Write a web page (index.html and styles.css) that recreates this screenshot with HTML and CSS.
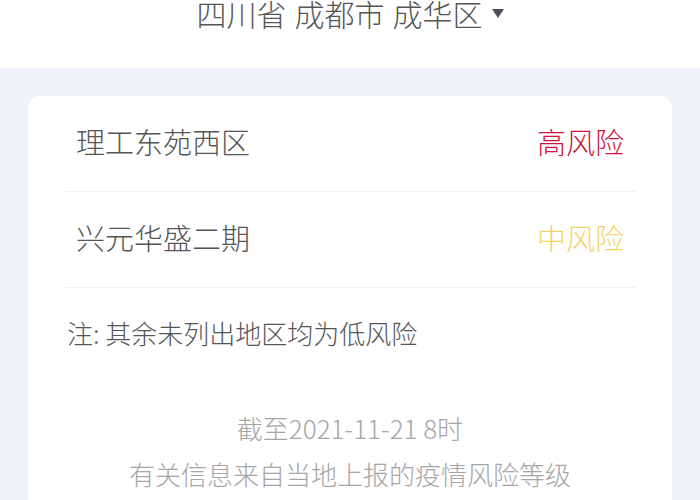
FILE: index.html
```html
<!DOCTYPE html>
<html lang="zh-CN">

<head>
    <meta charset="UTF-8">
    <meta name="viewport" content="width=device-width, initial-scale=1.0">
    <title>风险地区</title>
    <link rel="stylesheet" href="styles.css">
</head>

<body>

    <!-- 地区选择 -->
    <div class="header">
        <div class="area">
            <span>四川省</span>
            <span>成都市</span>
            <span>成华区</span>
            <i class="arrow"></i>
        </div>
    </div>

    <div class="main">
        <div class="card">
            <ul class="risk-list">
                <li>
                    <span class="name">理工东苑西区</span>
                    <span class="level high">高风险</span>
                </li>
                <li>
                    <span class="name">兴元华盛二期</span>
                    <span class="level middle">中风险</span>
                </li>
            </ul>

            <p class="note">注: 其余未列出地区均为低风险</p>

            <div class="footer">
                <p>截至2021-11-21 8时</p>
                <p>有关信息来自当地上报的疫情风险等级</p>
            </div>
        </div>
    </div>

</body>

</html>
```

FILE: styles.css
```css
* {
    margin: 0;
    padding: 0;
    box-sizing: border-box;
}

ul {
    list-style: none;
}

body {
    background-color: #eff3f8;
    font-family: "Noto Sans CJK SC", "Noto Sans", sans-serif;
    font-weight: 300;
    color: #555;
}

.header {
    height: 68px;
    background-color: #fff;
}

.area {
    display: flex;
    justify-content: center;
    align-items: center;
    gap: 8px;
    height: 26px;
    font-size: 30px;
    line-height: 26px;
    color: #555;
}

.arrow {
    width: 0;
    height: 0;
    margin-left: 1px;
    border-left: 6px solid transparent;
    border-right: 6px solid transparent;
    border-top: 9px solid #4a4e5a;
}

.main {
    padding: 28px 28px 0;
}

.card {
    background-color: #fff;
    border-radius: 12px;
    padding: 0 37px 40px;
}

.risk-list li {
    display: flex;
    justify-content: space-between;
    align-items: center;
    height: 96px;
    padding: 0 11px 6px;
    border-bottom: 1px solid #eceef0;
    font-size: 29px;
}

.level.high {
    color: #c9153a;
}

.level.middle {
    color: #f4d36a;
}

.note {
    padding: 29px 2px 0;
    font-size: 26px;
    line-height: 32px;
}

.footer {
    padding-top: 56px;
    text-align: center;
    font-size: 26px;
    line-height: 46px;
    color: #a6a6a6;
}
```
